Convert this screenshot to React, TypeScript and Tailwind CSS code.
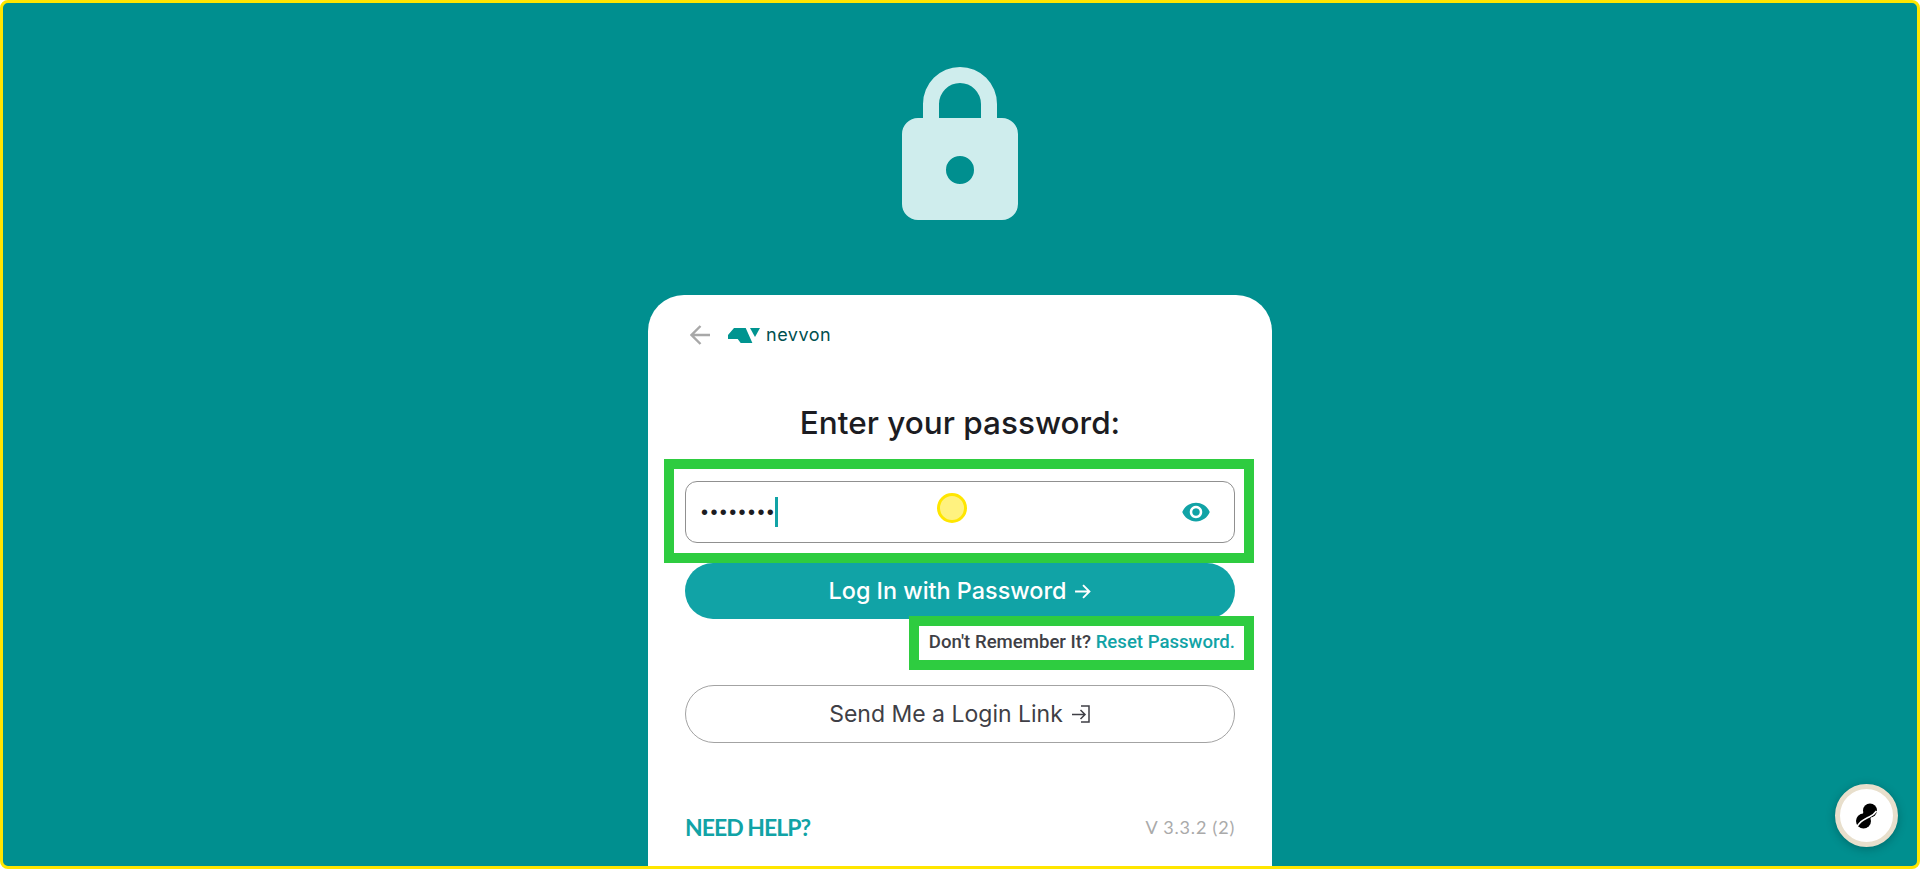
import React from "react";

function Annotation({ className }: { className: string }) {
  return <div className={`pointer-events-none absolute border-[10px] border-[#2ecc40] ${className}`} />;
}

export default function App() {
  return (
    <div className="relative h-[869px] w-full overflow-hidden rounded-[8px] border-[3px] border-[#ffe600] bg-[#008f8f] font-['Inter',sans-serif]">
      <div className="flex flex-col items-center">
        <svg viewBox="0 0 116 153" className="mt-[64px] h-[153px] w-[116px]">
          <path d="M21 51V37a37 37 0 0 1 74 0v14H79V37a21 21 0 0 0-42 0v14z" fill="#cfeded" />
          <path fillRule="evenodd" fill="#cfeded" d="M16 51h84a16 16 0 0 1 16 16v70a16 16 0 0 1-16 16H16a16 16 0 0 1-16-16V67a16 16 0 0 1 16-16zM58 89a14 14 0 1 0 0 28 14 14 0 0 0 0-28z" />
        </svg>
        <div className="mt-[75px] flex h-[600px] w-[624px] flex-col rounded-t-[36px] bg-white px-[37px] pt-[30px]">
          <div className="flex h-[20px] items-center">
            <svg viewBox="0 0 20 20" className="ml-[5px] h-[20px] w-[20px]" fill="none" stroke="#a8a8a8" strokeWidth="2.4">
              <path d="M20 10H1.500M10.500 1 1.500 10l9 9" />
            </svg>
            <svg viewBox="0 0 32 15" className="ml-[18px] h-[15px] w-[32px]" fill="#009490">
              <path d="M6 0h11.700L24.400 15H12.700L9.700 11H0V7z" />
              <path d="M22 0h10l-5 9z" />
            </svg>
            <span className="ml-[6px] text-[18px] font-normal leading-none tracking-[0.5px] text-[#00504f]">nevvon</span>
          </div>
          <h1 className="mt-[58px] text-center text-[31.500px] font-medium leading-[40px] text-[#1c1c22]">Enter your password:</h1>
          <div className="relative mt-[38px]">
            <Annotation className="-top-[22px] -left-[21px] -right-[19px] -bottom-[20px]" />
            <div className="flex h-[62px] items-center rounded-[12px] border border-[#909090] pl-[15px] pr-[23px]">
              <span className="text-[20px] leading-none tracking-[2.400px] text-[#1c1c22] font-['Liberation_Sans',sans-serif]">••••••••</span>
              <span className="-ml-[1px] h-[30px] w-[3px] bg-[#11a3a6]" />
              <svg viewBox="0 0 24 24" className="ml-auto h-[30px] w-[30px]" fill="#11a3a6">
                <path d="M12 4.500C7 4.500 2.730 7.610 1 12c1.730 4.390 6 7.500 11 7.500s9.270-3.110 11-7.500c-1.730-4.390-6-7.500-11-7.500zM12 17c-2.760 0-5-2.240-5-5s2.240-5 5-5 5 2.240 5 5-2.240 5-5 5zm0-8c-1.660 0-3 1.340-3 3s1.340 3 3 3 3-1.340 3-3-1.340-3-3-3z" />
              </svg>
            </div>
          </div>
          <button className="mt-[20px] flex h-[56px] items-center justify-center gap-[8px] rounded-full bg-[#11a3a6] text-[23.400px] font-medium text-white">
            Log In with Password
            <svg viewBox="0 0 16 16" className="h-[17px] w-[17px]" fill="none" stroke="white" strokeWidth="1.800">
              <path d="M1 8h13.500M8.500 2l6 6-6 6" />
            </svg>
          </button>
          <div className="relative mt-[12px] flex h-[24px] items-center justify-end self-end font-['Roboto',sans-serif] text-[18.600px] font-medium">
            <Annotation className="-top-[15px] -left-[20px] -right-[19px] -bottom-[15px]" />
            <span className="text-[#3f3f46]">Don't Remember It?&nbsp;</span>
            <span className="text-[#11a3a6]">Reset Password.</span>
          </div>
          <button className="mt-[30px] flex h-[58px] items-center justify-center gap-[8px] rounded-full border border-[#a3a3a3] bg-white text-[23px] font-normal text-[#3f3f46]">
            Send Me a Login Link
            <svg viewBox="0 0 20 20" className="h-[20px] w-[20px]" fill="none" stroke="#3f3f46" strokeWidth="1.500">
              <path d="M1 10.500h12.500M9.500 6l4.500 4.500L9.500 15M10 2h8v16h-8" />
            </svg>
          </button>
          <div className="mt-[68px] flex items-center justify-between">
            <span className="text-[23px] font-bold leading-[32px] tracking-[-1px] text-[#11a3a6] font-['Lato',sans-serif]">NEED HELP?</span>
            <span className="text-[18px] leading-[32px] tracking-[0.8px] text-[#aaaaaa] font-['Lato',sans-serif]">V 3.3.2 (2)</span>
          </div>
        </div>
      </div>
      <div className="absolute left-[934px] top-[490px] h-[30px] w-[30px] rounded-full border-[3px] border-[#ffe600] bg-[#fff27f]" />
      <div className="absolute left-[1832px] top-[781px] flex h-[63px] w-[63px] items-center justify-center rounded-full border-[5px] border-[#e8dfcc] bg-white shadow-[0_2px_10px_rgba(0,0,0,0.25)]">
        <svg viewBox="0 0 21 26" className="h-[26px] w-[21px]">
          <circle cx="14" cy="7.500" r="7" fill="#000" />
          <circle cx="7.500" cy="18" r="7.500" fill="#000" />
          <path d="M14 7.500 7.500 18" stroke="#000" strokeWidth="9" fill="none" />
          <path d="M1 23.500C5 17 9 16 12 14.500S18 12 20.500 8" stroke="#fff" strokeWidth="1.600" fill="none" />
        </svg>
      </div>
    </div>
  );
}
